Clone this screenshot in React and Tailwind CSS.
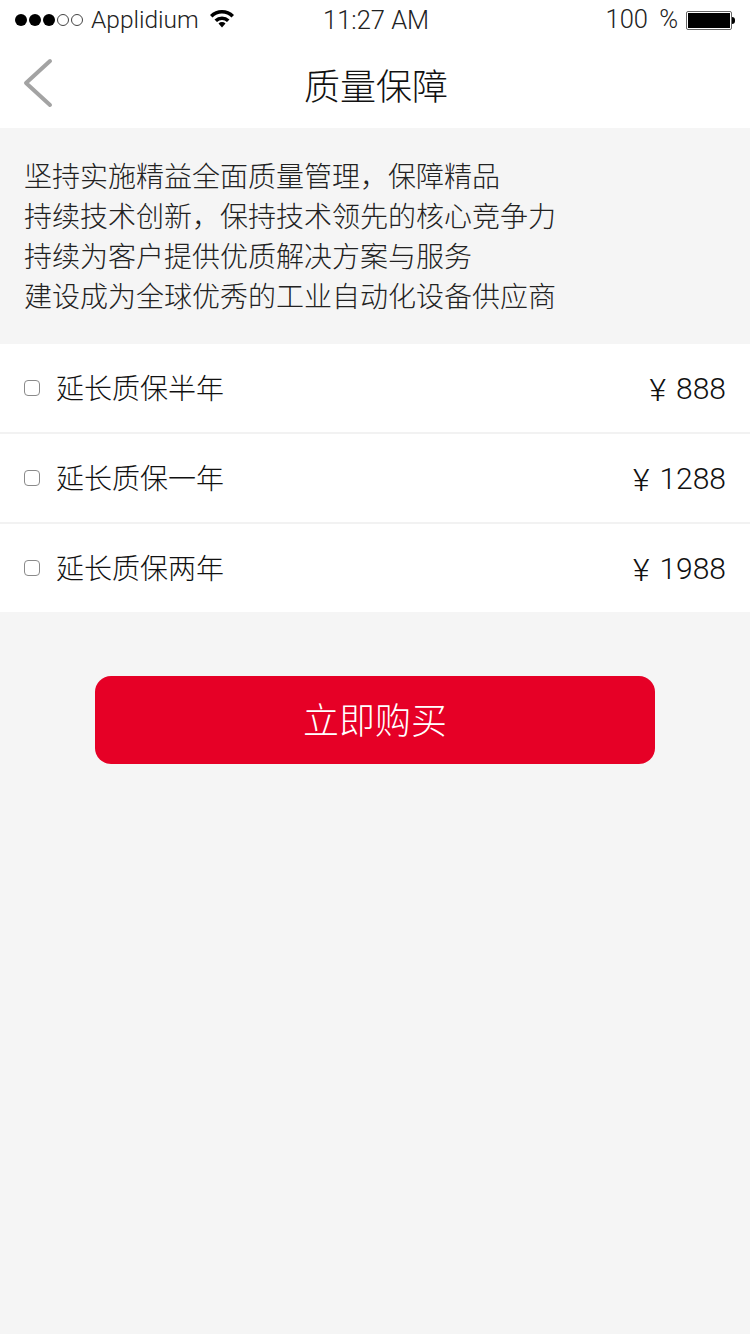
const font = "font-['Roboto','Noto_Sans_CJK_SC',sans-serif]";

const plans = [
  { name: "延长质保半年", price: "888" },
  { name: "延长质保一年", price: "1288" },
  { name: "延长质保两年", price: "1988" },
];

function StatusBar() {
  return (
    <div className="relative flex h-10 items-center justify-between pl-[15px] pr-[15px] font-light text-[#222]">
      <div className="flex items-center">
        <div className="flex items-center gap-[2px]">
          <span className="h-[12px] w-[12px] rounded-full bg-black" />
          <span className="h-[12px] w-[12px] rounded-full bg-black" />
          <span className="h-[12px] w-[12px] rounded-full bg-black" />
          <span className="h-[12px] w-[12px] rounded-full border border-[#444]" />
          <span className="h-[12px] w-[12px] rounded-full border border-[#444]" />
        </div>
        <span className="ml-[8px] text-[24.5px] leading-none">Applidium</span>
        <svg className="ml-[10px] mb-[4px]" width="26" height="20" viewBox="0 0 26 20">
          <path d="M1 7 A17 17 0 0 1 25 7 L22.5 9.5 A13.5 13.5 0 0 0 3.5 9.5 Z" fill="#000" />
          <path d="M5.5 11.5 A11 11 0 0 1 20.5 11.5 L18 14 A7.5 7.5 0 0 0 8 14 Z" fill="#000" />
          <path d="M9.5 15.5 A5 5 0 0 1 16.5 15.5 L13 19.5 Z" fill="#000" />
        </svg>
      </div>
      <span className="absolute left-[323px] top-[4px] text-[25.5px] leading-[32px]">11:27 AM</span>
      <div className="flex items-center">
        <span className="text-[25.5px] leading-none [word-spacing:5px]">100 %</span>
        <div className="ml-[8px] flex h-[19px] w-[46px] items-center rounded-[2px] border border-[#666] p-[1px]">
          <div className="h-full w-full bg-black" />
        </div>
        <div className="h-[7px] w-[3px] rounded-r-full bg-black" />
      </div>
    </div>
  );
}

function NavBar() {
  return (
    <div className="relative flex h-[88px] items-center justify-center bg-white">
      <svg className="absolute left-[22px] top-[18px]" width="32" height="50" viewBox="0 0 32 50">
        <path d="M28 3 L4 25 L28 47" fill="none" stroke="#a3a3a3" strokeWidth="4" strokeLinecap="round" strokeLinejoin="round" />
      </svg>
      <h1 className="pl-[2px] pt-[7px] text-[36px] font-light text-[#111]">质量保障</h1>
    </div>
  );
}

function PlanRow({ name, price, last }) {
  return (
    <label className={`flex h-[88px] items-center bg-white pl-6 pr-6 ${last ? "" : "box-content border-b-2 border-[#f2f2f2]"}`}>
      <input type="checkbox" className="h-4 w-4 appearance-none rounded-[4px] border border-[#8a8a8a] bg-white" />
      <span className="ml-4 pt-1 text-[28px] font-light text-[#111]">{name}</span>
      <span className="ml-auto flex items-center font-light text-[#111]">
        <span className="pt-1 text-[32px]">¥</span>
        <span className="ml-[10px] text-[30px]">{price}</span>
      </span>
    </label>
  );
}

export default function App() {
  return (
    <div className={`flex min-h-[1334px] w-full flex-col bg-[#f5f5f5] ${font}`}>
      <div className="bg-white">
        <StatusBar />
        <NavBar />
      </div>

      <div className="px-6 pb-[26px] pt-[30px] text-[28px] font-light leading-10 text-[#222]">
        <p>坚持实施精益全面质量管理，保障精品</p>
        <p>持续技术创新，保持技术领先的核心竞争力</p>
        <p>持续为客户提供优质解决方案与服务</p>
        <p>建设成为全球优秀的工业自动化设备供应商</p>
      </div>

      <div>
        {plans.map((plan, i) => (
          <PlanRow key={plan.name} name={plan.name} price={plan.price} last={i === plans.length - 1} />
        ))}
      </div>

      <div className="mt-16 flex justify-center">
        <button className="h-[88px] w-[560px] rounded-2xl bg-[#e60026] pt-1 text-[36px] font-light text-white">
          立即购买
        </button>
      </div>
    </div>
  );
}
